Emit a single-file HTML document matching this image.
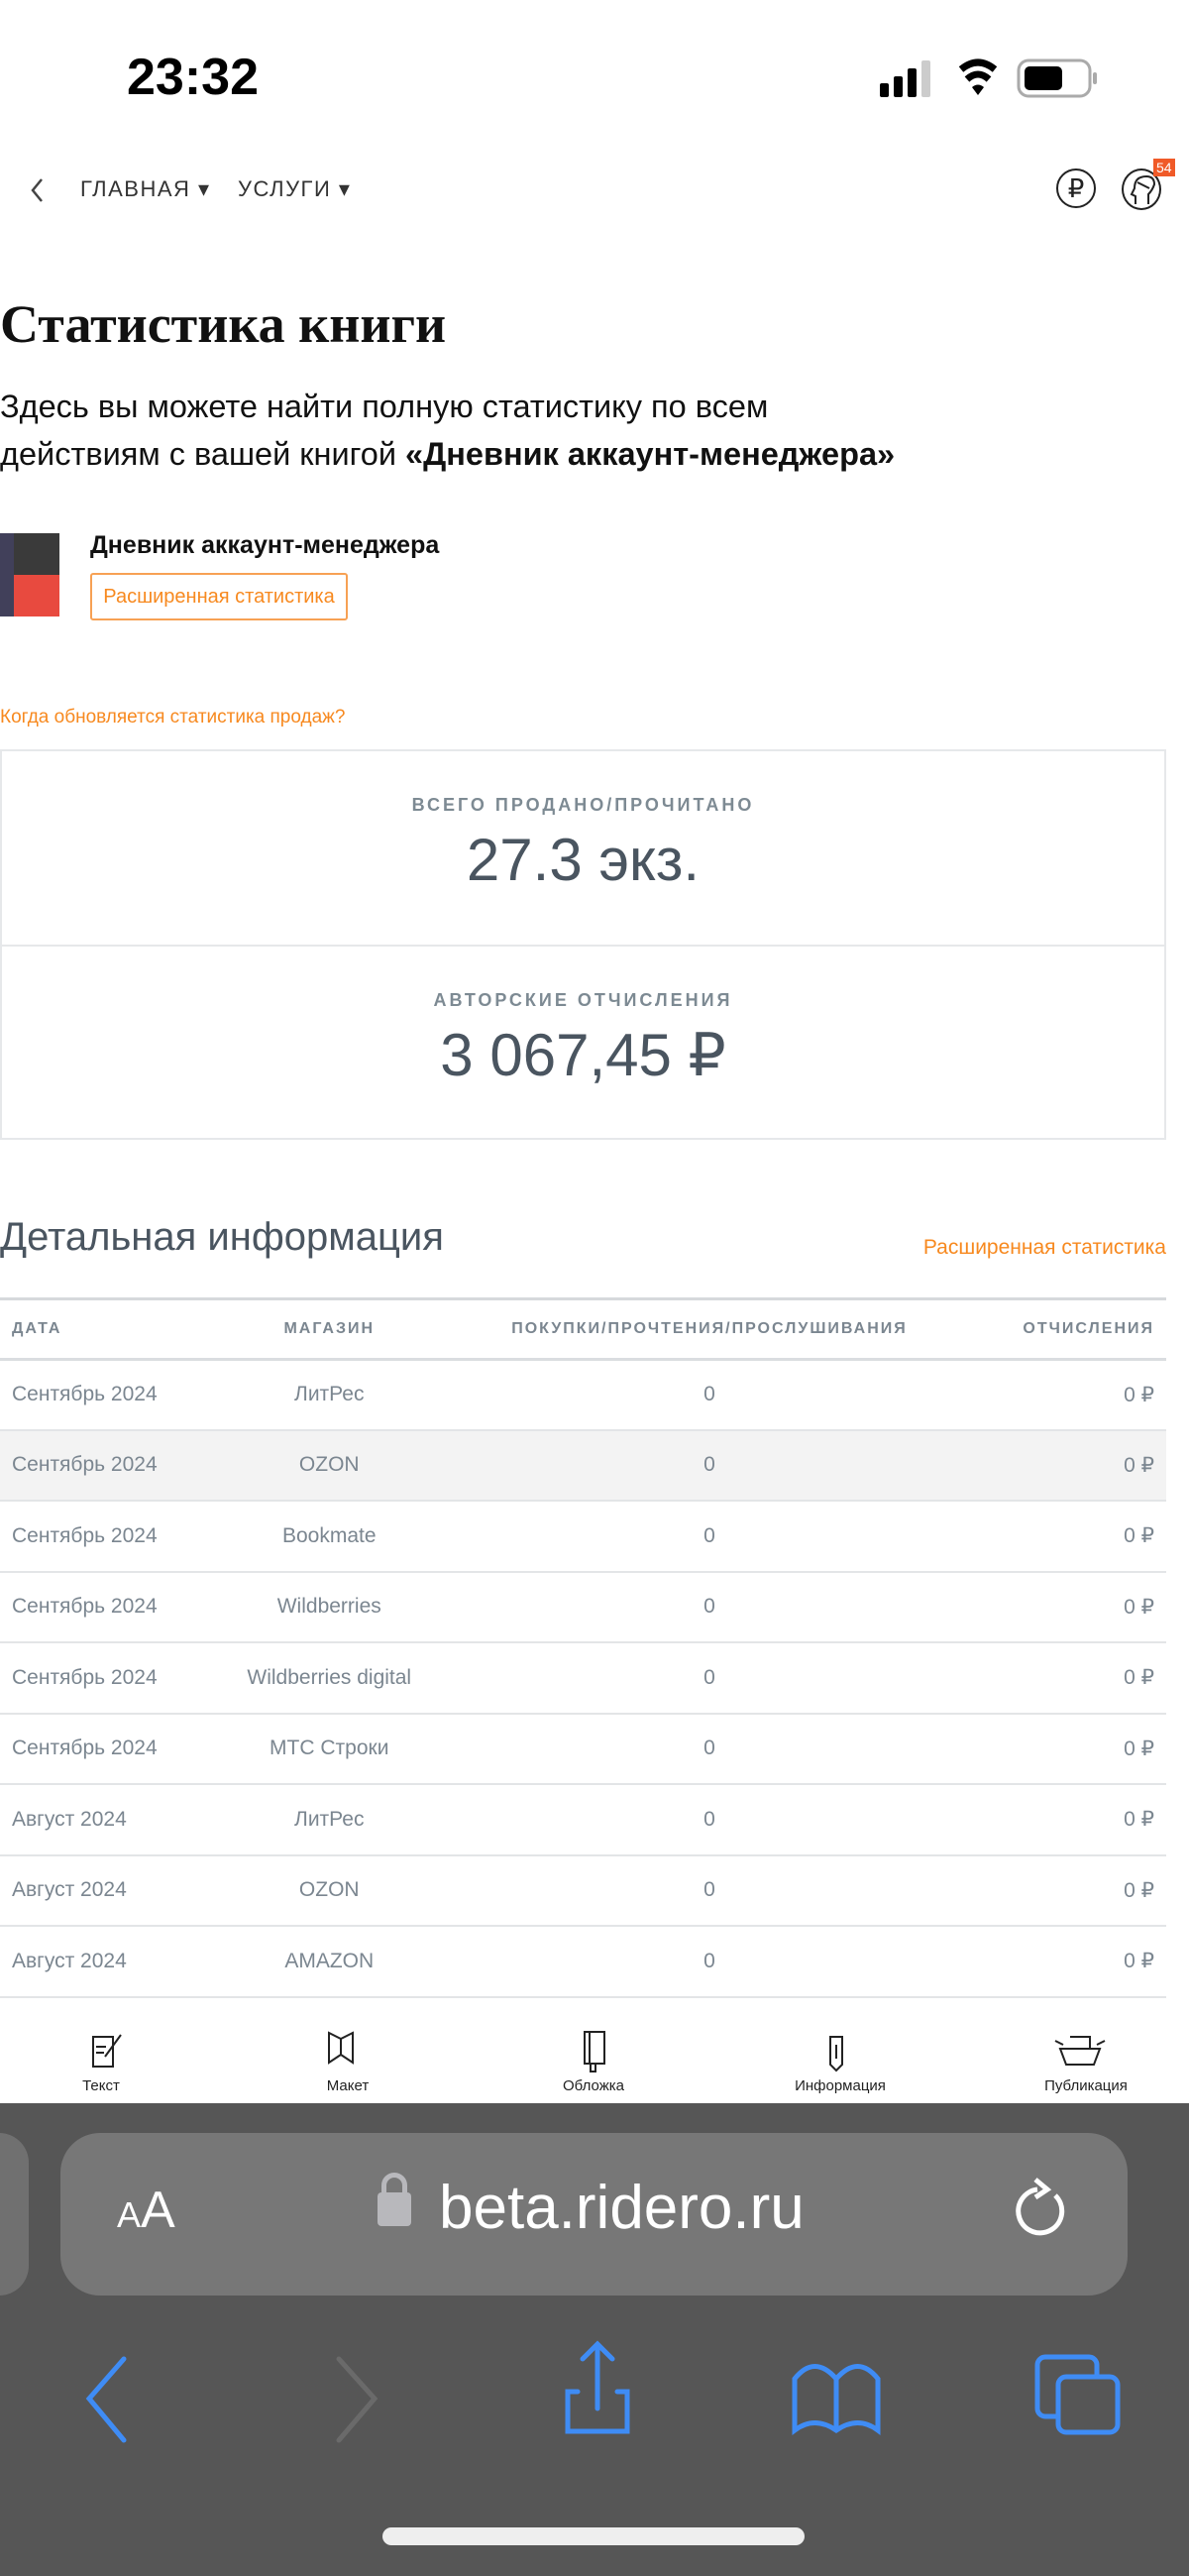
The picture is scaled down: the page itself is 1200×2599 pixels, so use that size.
<!DOCTYPE html>
<html><head><meta charset="utf-8"><style>
*{margin:0;padding:0;box-sizing:border-box}
body{width:1200px;height:2599px;position:relative;background:#fff;font-family:"Liberation Sans Narrow","Liberation Sans",sans-serif;overflow:hidden;color:#222}
.a{position:absolute}
.or{color:#f7891f}
.lbl{font-size:18px;letter-spacing:3px;color:#7d8a93;font-weight:bold;width:100%;text-align:center}
.val{font-size:60px;color:#4a5560;width:100%;text-align:center}
table{border-collapse:collapse;width:1177px;font-size:21px;color:#7b8690}
td,th{height:71.5px;border-bottom:2px solid #e3e5e7;padding:0 12px}
th{font-size:16px;letter-spacing:2px;height:59px;border-bottom:3px solid #dadde0}
.tab{position:absolute;top:2050px;text-align:center;font-size:15px;color:#222;width:120px}
</style></head><body>
<div class="a" style="left:128px;top:48px;font-size:52px;font-weight:bold;font-family:'Liberation Sans',sans-serif;color:#000">23:32</div>
<svg class="a" style="left:880px;top:58px" width="260" height="42">
<rect x="8" y="26" width="9" height="14" rx="2"/><rect x="22" y="19" width="9" height="21" rx="2"/><rect x="36" y="11" width="9" height="29" rx="2"/><rect x="50" y="3" width="9" height="37" rx="2" fill="#ccc"/>
<path d="M90 12 Q107 -2 124 12" stroke="#000" stroke-width="7" fill="none"/><path d="M96 22 Q107 12 118 22" stroke="#000" stroke-width="7" fill="none"/><path d="M101 30 L107 38 L113 30 Q107 25 101 30Z"/>
<rect x="148" y="3" width="72" height="36" rx="10" fill="none" stroke="#aaa" stroke-width="3"/><rect x="154" y="9" width="38" height="24" rx="5"/><rect x="223" y="15" width="4" height="12" rx="2" fill="#aaa"/>
</svg>
<svg class="a" style="left:28px;top:178px" width="20" height="28"><path d="M14 3 L5 14 L14 25" stroke="#444" stroke-width="2.5" fill="none"/></svg>
<div class="a" style="left:81px;top:178px;font-size:22px;letter-spacing:1.5px;color:#333">ГЛАВНАЯ ▾</div>
<div class="a" style="left:240px;top:178px;font-size:22px;letter-spacing:1.5px;color:#333">УСЛУГИ ▾</div>
<div class="a" style="left:1066px;top:170px;width:40px;height:40px;border:2.5px solid #222;border-radius:50%;text-align:center;font-size:26px;line-height:36px;font-family:'Liberation Sans',sans-serif;color:#222">₽</div>
<div class="a" style="left:1132px;top:170px;width:40px;height:42px;border:2.5px solid #222;border-radius:50%"></div>
<svg class="a" style="left:1132px;top:170px" width="40" height="42" fill="none" stroke="#222" stroke-width="2"><path d="M14 36 v-8 l-4 -2 l3 -6 q0 -12 12 -12 q8 0 8 8 q-2 6 -6 10 v10 M16 14 l12 6"/></svg>
<div class="a" style="left:1164px;top:160px;background:#f05a28;color:#fff;font-size:14px;padding:1px 3px">54</div>
<div class="a" style="left:0;top:296px;font-family:'Liberation Serif',serif;font-weight:bold;font-size:54px;color:#111">Статистика книги</div>
<div class="a" style="left:0;top:386px;font-size:32.5px;line-height:48px;color:#111">Здесь вы можете найти полную статистику по всем<br>действиям с вашей книгой <b>«Дневник аккаунт-менеджера»</b></div>
<div class="a" style="left:0;top:538px;width:60px;height:84px;background:#e84a3f"><div style="height:42px;background:#3a3a3a"></div><div style="position:absolute;left:0;top:0;width:14px;height:84px;background:#41405a"></div></div>
<div class="a" style="left:91px;top:536px;font-size:25px;font-weight:bold;color:#111">Дневник аккаунт-менеджера</div>
<div class="a or" style="left:91px;top:578px;width:260px;height:48px;border:2px solid #f7a154;border-radius:3px;font-size:20px;line-height:44px;text-align:center">Расширенная статистика</div>
<div class="a or" style="left:0;top:713px;font-size:19px">Когда обновляется статистика продаж?</div>
<div class="a" style="left:0;top:756px;width:1177px;height:199px;border:2px solid #e6e8ea"><div class="lbl" style="margin-top:44px">ВСЕГО ПРОДАНО/ПРОЧИТАНО</div><div class="val" style="margin-top:10px">27.3 экз.</div></div>
<div class="a" style="left:0;top:953px;width:1177px;height:197px;border:2px solid #e6e8ea"><div class="lbl" style="margin-top:44px">АВТОРСКИЕ ОТЧИСЛЕНИЯ</div><div class="val" style="margin-top:10px">3 067,45 ₽</div></div>
<div class="a" style="left:0;top:1226px;font-size:40px;color:#4a5560">Детальная информация</div>
<div class="a or" style="right:23px;top:1247px;font-size:21px">Расширенная статистика</div>
<div class="a" style="left:0;top:1309px;width:1177px;border-top:3px solid #d6d9dc"></div>
<table class="a" style="left:0;top:1312px">
<tr><th style="text-align:left">ДАТА</th><th>МАГАЗИН</th><th style="text-align:center">ПОКУПКИ/ПРОЧТЕНИЯ/ПРОСЛУШИВАНИЯ</th><th style="text-align:right">ОТЧИСЛЕНИЯ</th></tr>
<tr><td>Сентябрь 2024</td><td align="center">ЛитРес</td><td align="center">0</td><td align="right">0 ₽</td></tr>
<tr style="background:#f3f3f3"><td>Сентябрь 2024</td><td align="center">OZON</td><td align="center">0</td><td align="right">0 ₽</td></tr>
<tr><td>Сентябрь 2024</td><td align="center">Bookmate</td><td align="center">0</td><td align="right">0 ₽</td></tr>
<tr><td>Сентябрь 2024</td><td align="center">Wildberries</td><td align="center">0</td><td align="right">0 ₽</td></tr>
<tr><td>Сентябрь 2024</td><td align="center">Wildberries digital</td><td align="center">0</td><td align="right">0 ₽</td></tr>
<tr><td>Сентябрь 2024</td><td align="center">МТС Строки</td><td align="center">0</td><td align="right">0 ₽</td></tr>
<tr><td>Август 2024</td><td align="center">ЛитРес</td><td align="center">0</td><td align="right">0 ₽</td></tr>
<tr><td>Август 2024</td><td align="center">OZON</td><td align="center">0</td><td align="right">0 ₽</td></tr>
<tr><td>Август 2024</td><td align="center">AMAZON</td><td align="center">0</td><td align="right">0 ₽</td></tr>
</table>
<svg class="a" style="left:0;top:2045px" width="1200" height="50" fill="none" stroke="#222" stroke-width="2">
<path d="M94 10 h20 v30 h-20z M97 20h10 M97 26h8 M106 30 L122 8"/>
<path d="M332 6 v30 l12 -8 l12 8 v-30 l-12 6z M344 12 v16"/>
<path d="M590 5 h20 v32 h-20z M595 5 v32 M596 37 v8 h5 v-8"/>
<path d="M838 10 h12 v28 l-6 6 l-6 -6z M844 18 v14"/>
<path d="M1070 22 h40 l-6 16 h-28z M1080 10 h20 v12 M1065 14 l8 4 M1115 14 l-8 4"/>
</svg>
<div class="tab" style="left:42px;top:2096px">Текст</div>
<div class="tab" style="left:291px;top:2096px">Макет</div>
<div class="tab" style="left:539px;top:2096px">Обложка</div>
<div class="tab" style="left:788px;top:2096px">Информация</div>
<div class="tab" style="left:1036px;top:2096px">Публикация</div>
<div class="a" style="left:0;top:2122px;width:1200px;height:477px;background:#565656"></div>
<div class="a" style="left:-40px;top:2152px;width:69px;height:164px;background:#707070;border-radius:30px"></div>
<div class="a" style="left:61px;top:2152px;width:1077px;height:164px;background:#777;border-radius:40px"></div>
<div class="a" style="left:118px;top:2200px;color:#fff;font-family:'Liberation Sans',sans-serif"><span style="font-size:36px">A</span><span style="font-size:52px">A</span></div>
<div class="a" style="left:381px;top:2212px;width:34px;height:34px;background:#b8b8bc;border-radius:4px"></div>
<div class="a" style="left:385px;top:2192px;width:26px;height:30px;border:5px solid #b8b8bc;border-radius:13px 13px 0 0"></div>
<div class="a" style="left:443px;top:2192px;color:#fff;font-size:62px;font-family:'Liberation Sans',sans-serif">beta.ridero.ru</div>
<svg class="a" style="left:1025px;top:2195px" width="60" height="70"><path d="M40 20 A22 22 0 1 1 22 14" stroke="#fff" stroke-width="5" fill="none"/><path d="M20 4 L32 14 L20 22" stroke="#fff" stroke-width="5" fill="none"/></svg>
<svg class="a" style="left:0;top:2360px" width="1200" height="110" fill="none" stroke-width="5" stroke-linecap="round">
<path d="M125 20 L90 60 L125 102" stroke="#3f8cf5"/>
<path d="M342 20 L378 60 L342 102" stroke="#6a6a6a"/>
<path d="M583 53 h-10 v40 h60 v-40 h-10 M603 5 v65 M588 20 L603 5 L618 20" stroke="#3f8cf5"/>
<path d="M802 92 v-52 q20 -25 42 0 q22 -25 42 0 v52 q-20 -15 -42 0 q-22 -15 -42 0z M844 40 v52" stroke="#3f8cf5"/>
<rect x="1047" y="18" width="60" height="60" rx="8" stroke="#3f8cf5"/><rect x="1068" y="38" width="60" height="56" rx="8" stroke="#3f8cf5" fill="#565656"/>
</svg>
<div class="a" style="left:386px;top:2550px;width:426px;height:18px;background:#eee;border-radius:9px"></div>
</body></html>
